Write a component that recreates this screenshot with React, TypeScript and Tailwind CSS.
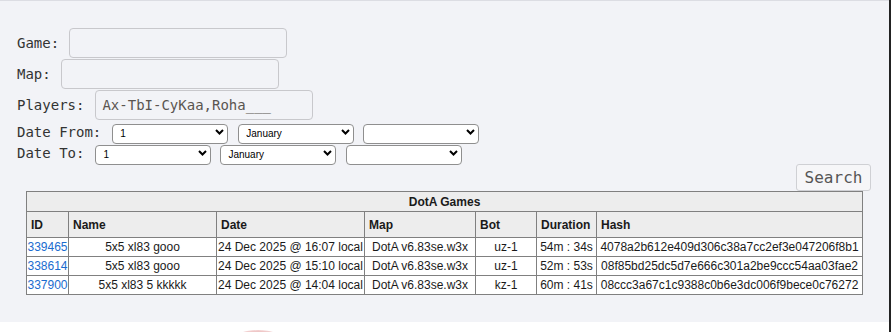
import React from "react";

const rows = [
  {
    id: "339465",
    name: "5x5 xl83 gooo",
    date: "24 Dec 2025 @ 16:07 local",
    map: "DotA v6.83se.w3x",
    bot: "uz-1",
    dur: "54m : 34s",
    hash: "4078a2b612e409d306c38a7cc2ef3e047206f8b1",
  },
  {
    id: "338614",
    name: "5x5 xl83 gooo",
    date: "24 Dec 2025 @ 15:10 local",
    map: "DotA v6.83se.w3x",
    bot: "uz-1",
    dur: "52m : 53s",
    hash: "08f85bd25dc5d7e666c301a2be9ccc54aa03fae2",
  },
  {
    id: "337900",
    name: "5x5 xl83 5 kkkkk",
    date: "24 Dec 2025 @ 14:04 local",
    map: "DotA v6.83se.w3x",
    bot: "kz-1",
    dur: "60m : 41s",
    hash: "08ccc3a67c1c9388c0b6e3dc006f9bece0c76272",
  },
];

function Sel({ value, className = "" }: { value: string; className?: string }) {
  return (
    <div className={"relative w-[116px] h-[20px] " + className}>
      <select
        defaultValue={value}
        className="appearance-none w-full h-full bg-white border border-[#8f8f8f] rounded-[4px] pl-[7px] text-[10px] leading-none text-black font-['Liberation_Sans',Arial,sans-serif] outline-none"
      >
        <option value={value}>{value}</option>
      </select>
      <svg
        className="absolute right-[4px] top-[7px] pointer-events-none"
        width="9"
        height="6"
        viewBox="0 0 9 6"
      >
        <polyline points="1,1 4.5,4.5 8,1" fill="none" stroke="#000" strokeWidth="2" />
      </svg>
    </div>
  );
}

const th =
  "border border-[#808080] bg-[#ededed] text-left pl-[4px] font-bold h-[26px] align-middle";
const td = "border border-[#808080] bg-white text-center h-[19px] px-0 align-middle whitespace-nowrap";

export default function App() {
  return (
    <div className="w-[891px] h-[332px] overflow-hidden bg-white flex">
      <div className="w-[889px] flex flex-col">
        <div className="shrink-0 bg-[#f2f3f7] border-t border-[#dcdde3] h-[322px] pt-[27px] pl-[17px] pr-[18px] font-['DejaVu_Sans_Mono',monospace] text-[14px] text-[#333]">
          <div className="flex items-center h-[30px]">
            <span>Game:</span>
            <input className="ml-[10px] w-[218px] h-[30px] border border-[#c8c8cc] rounded-[4px] bg-[#f2f3f7] px-[7px] outline-none" />
          </div>
          <div className="flex items-center h-[30px] mt-px">
            <span>Map:</span>
            <input className="ml-[10px] w-[218px] h-[30px] border border-[#c8c8cc] rounded-[4px] bg-[#f2f3f7] px-[7px] outline-none" />
          </div>
          <div className="flex items-center h-[30px] mt-px">
            <span>Players:</span>
            <div
              role="textbox"
              className="ml-[11px] w-[218px] h-[30px] border border-[#c8c8cc] rounded-[4px] bg-[#f2f3f7] px-[6px] flex items-center text-[#5a5550] whitespace-pre"
            >
              Ax-TbI-CyKaa,Roha___
            </div>
          </div>
          <div className="flex items-center h-[20px] mt-[2px]">
            <span>Date From:</span>
            <Sel value="1" className="ml-[11px]" />
            <Sel value="January" className="ml-[10px]" />
            <Sel value="" className="ml-[9px]" />
          </div>
          <div className="flex items-center h-[20px] mt-px">
            <span>Date To:</span>
            <Sel value="1" className="ml-[11px]" />
            <Sel value="January" className="ml-[9px]" />
            <Sel value="" className="ml-[10px]" />
          </div>
          <div className="flex justify-end mt-[1px]">
            <button className="h-[27px] w-[75px] border border-[#cfd0d4] rounded-[3px] bg-[#f6f6f8] text-[16px] text-[#555] leading-none">
              Search
            </button>
          </div>
          <table className="ml-[9px] w-[837px] table-fixed border-collapse border border-[#808080] font-['Liberation_Sans',Arial,sans-serif] text-[12px] text-[#1a1a1a]">
            <colgroup>
              <col className="w-[42px]" />
              <col className="w-[148px]" />
              <col className="w-[148px]" />
              <col className="w-[111px]" />
              <col className="w-[61px]" />
              <col className="w-[60px]" />
              <col className="w-[266px]" />
            </colgroup>
            <thead>
              <tr>
                <th colSpan={7} className="border border-[#808080] bg-[#ededed] text-center font-bold h-[20px]">
                  DotA Games
                </th>
              </tr>
              <tr>
                <th className={th}>ID</th>
                <th className={th}>Name</th>
                <th className={th}>Date</th>
                <th className={th}>Map</th>
                <th className={th}>Bot</th>
                <th className={th}>Duration</th>
                <th className={th}>Hash</th>
              </tr>
            </thead>
            <tbody>
              {rows.map((r) => (
                <tr key={r.id}>
                  <td className={td}>
                    <a href="#" className="text-[#1a6ccf]">
                      {r.id}
                    </a>
                  </td>
                  <td className={td}>{r.name}</td>
                  <td className={td}>{r.date}</td>
                  <td className={td}>{r.map}</td>
                  <td className={td}>{r.bot}</td>
                  <td className={td}>{r.dur}</td>
                  <td className={td}>{r.hash}</td>
                </tr>
              ))}
            </tbody>
          </table>
        </div>
        <div className="shrink-0 ml-[233px] mt-[8px] w-[50px] h-[20px] rounded-[50%] bg-[radial-gradient(ellipse_at_center,#d98a8a_0%,#efc6c6_60%,#ffffff_100%)]" />
      </div>
      <div className="w-[2px] h-full bg-[#222]" />
    </div>
  );
}
